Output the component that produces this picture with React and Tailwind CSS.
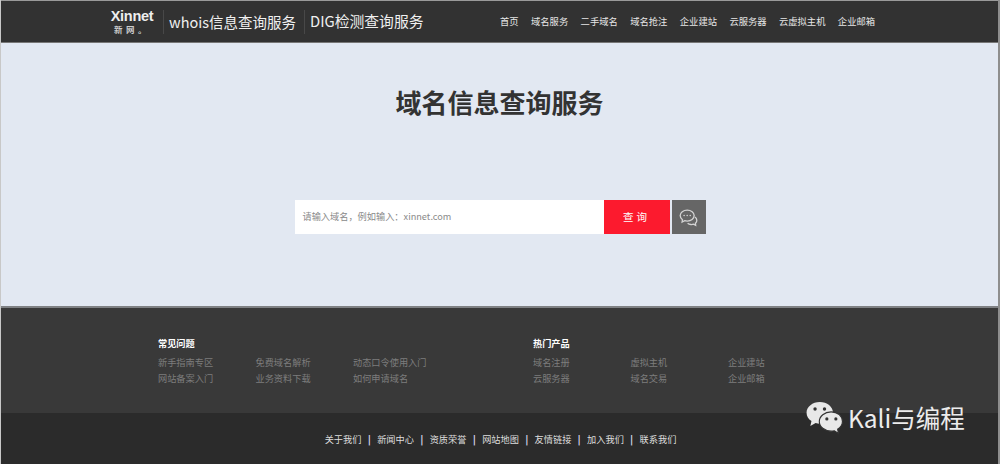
const font = { fontFamily: '"Microsoft YaHei","Noto Sans CJK SC","Noto Sans",sans-serif' };
const nav = ["首页", "域名服务", "二手域名", "域名抢注", "企业建站", "云服务器", "云虚拟主机", "企业邮箱"];
const bottom = ["关于我们", "新闻中心", "资质荣誉", "网站地图", "友情链接", "加入我们", "联系我们"];
const faq = ["新手指南专区", "免费域名解析", "动态口令使用入门", "网站备案入门", "业务资料下载", "如何申请域名"];
const hot = ["域名注册", "虚拟主机", "企业建站", "云服务器", "域名交易", "企业邮箱"];

function LinkGroup({ title, items, className }) {
  return (
    <div className={className}>
      <div className="h-[16px] text-[9.2px] leading-[16px] font-bold text-white">{title}</div>
      <div className="mt-[3px] grid grid-cols-[97.5px_97.5px_97.5px] text-[9.2px] leading-[16px] text-[#7d7d7d]">
        {items.map((t) => (
          <div key={t} className="whitespace-nowrap">{t}</div>
        ))}
      </div>
    </div>
  );
}

function Chat({ className }) {
  return (
    <svg viewBox="0 0 24 24" className={className} fill="none" stroke="currentColor" strokeWidth="1.5">
      <path d="M10.5 3.5c-4.4 0-8 2.800-8 6.300 0 1.900 1 3.500 2.600 4.700l-.4 2.600 2.900-1.500c.9.300 1.900.5 2.900.5 4.400 0 8-2.800 8-6.300s-3.600-6.300-8-6.300z" />
      <path d="M19.500 11.500c1.300 1 2 2.300 2 3.800 0 1.300-.6 2.500-1.600 3.400l.3 2.300-2.500-1.300c-1 .3-2 .4-3 .3-1.500-.1-2.800-.7-3.700-1.500" />
      <circle cx="7" cy="9.800" r="0.9" fill="currentColor" stroke="none" />
      <circle cx="10.500" cy="9.800" r="0.9" fill="currentColor" stroke="none" />
      <circle cx="14" cy="9.800" r="0.9" fill="currentColor" stroke="none" />
    </svg>
  );
}

function WeChat({ className }) {
  return (
    <svg viewBox="0 0 40 36" className={className}>
      <path d="M15 1C7.300 1 1 6.100 1 12.400c0 3.600 2 6.700 5.200 8.800L5 26.500l5.600-3.100c1.400.4 2.900.6 4.400.6 7.700 0 14-5.200 14-11.600S22.700 1 15 1z" fill="#e8e8e8" />
      <path d="M27 11.500c-6.900 0-12.500 4.600-12.500 10.200S20.100 31.900 27 31.900c1.200 0 2.400-.1 3.500-.4l4.300 3-.9-4.700c3.100-1.900 5.100-4.800 5.100-8.100 0-5.600-5.100-10.200-12-10.200z" fill="#e8e8e8" stroke="#333" strokeWidth="1.200" />
      <circle cx="10" cy="8.500" r="1.800" fill="#333" />
      <circle cx="20" cy="8.500" r="1.800" fill="#333" />
      <circle cx="22.500" cy="19" r="1.700" fill="#333" />
      <circle cx="32" cy="19" r="1.700" fill="#333" />
    </svg>
  );
}

export default function App() {
  return (
    <div style={font} className="relative flex h-[464px] w-[1000px] flex-col overflow-hidden border-r-[2px] border-l-[1px] border-r-[#8e8e8e] border-l-[#c8c8c8] bg-[#e2e8f2]">
      <header className="flex h-[43px] shrink-0 items-center border-t-[1px] border-b-[1px] border-t-[#9a9a9a] border-b-[#777777] bg-[#323232] pl-[108px] text-white">
        <div className="flex w-[46px] flex-col items-center leading-none">
          <span className="font-['Liberation_Sans',sans-serif] text-[14.5px] leading-[13px] font-bold tracking-[-0.3px] text-[#eeeeee]">Xinnet</span>
          <span className="mt-[1px] text-[8.5px] leading-[10px] font-bold tracking-[3.5px] text-[#cccccc]">新网。</span>
        </div>
        <div className="ml-[8px] h-[24px] w-px bg-[#484848]" />
        <div className="ml-[5px] w-[135px] text-[14.5px] whitespace-nowrap text-[#f0f0f0]">whois信息查询服务</div>
        <div className="h-[24px] w-px bg-[#484848]" />
        <div className="ml-[5px] w-[113px] text-[14.8px] whitespace-nowrap text-[#f0f0f0]">DIG检测查询服务</div>
        <nav className="ml-[77px] flex gap-x-[12.4px] text-[9.3px] whitespace-nowrap text-[#e6e6e6]">
          {nav.map((t) => (
            <span key={t}>{t}</span>
          ))}
        </nav>
      </header>

      <main className="flex h-[263px] shrink-0 flex-col items-center">
        <h1 className="mt-[40px] h-[38px] text-[26px] leading-[38px] font-bold text-[#333333]">域名信息查询服务</h1>
        <div className="mt-[79px] flex h-[34px] pl-[1px]">
          <div className="flex w-[309px] items-center bg-white pl-[8px] text-[9.2px] text-[#8a8a8a]">请输入域名，例如输入：xinnet.com</div>
          <div className="flex w-[66px] items-center justify-center bg-[#fc1a2e] text-[10.5px] tracking-[3px] text-white">查询</div>
          <div className="ml-[2px] flex w-[34px] items-center justify-center bg-[#666666] text-[#d4d4d4]">
            <Chat className="h-[21px] w-[21px]" />
          </div>
        </div>
      </main>

      <section className="flex h-[107px] shrink-0 border-t-[2px] border-t-[#7f8184] bg-[#393939] pt-[27px] pl-[157px]">
        <LinkGroup title="常见问题" items={faq} className="w-[375px]" />
        <LinkGroup title="热门产品" items={hot} />
      </section>

      <footer className="flex flex-1 items-center justify-center bg-[#2b2b2b] pt-[3px] pl-[2px] text-[9.2px] whitespace-nowrap text-[#dddddd]">
        {bottom.map((t, i) => (
          <span key={t} className="flex items-center">
            {i > 0 && <span className="mx-[6.5px] font-bold text-[#e4e4ff]">|</span>}
            {t}
          </span>
        ))}
      </footer>

      <div className="absolute top-[401px] left-[804px] flex items-center text-[#ececec]">
        <WeChat className="h-[34px] w-[39px]" />
        <span className="ml-[4px] text-[24.5px] leading-[34px] whitespace-nowrap">Kali与编程</span>
      </div>
    </div>
  );
}
